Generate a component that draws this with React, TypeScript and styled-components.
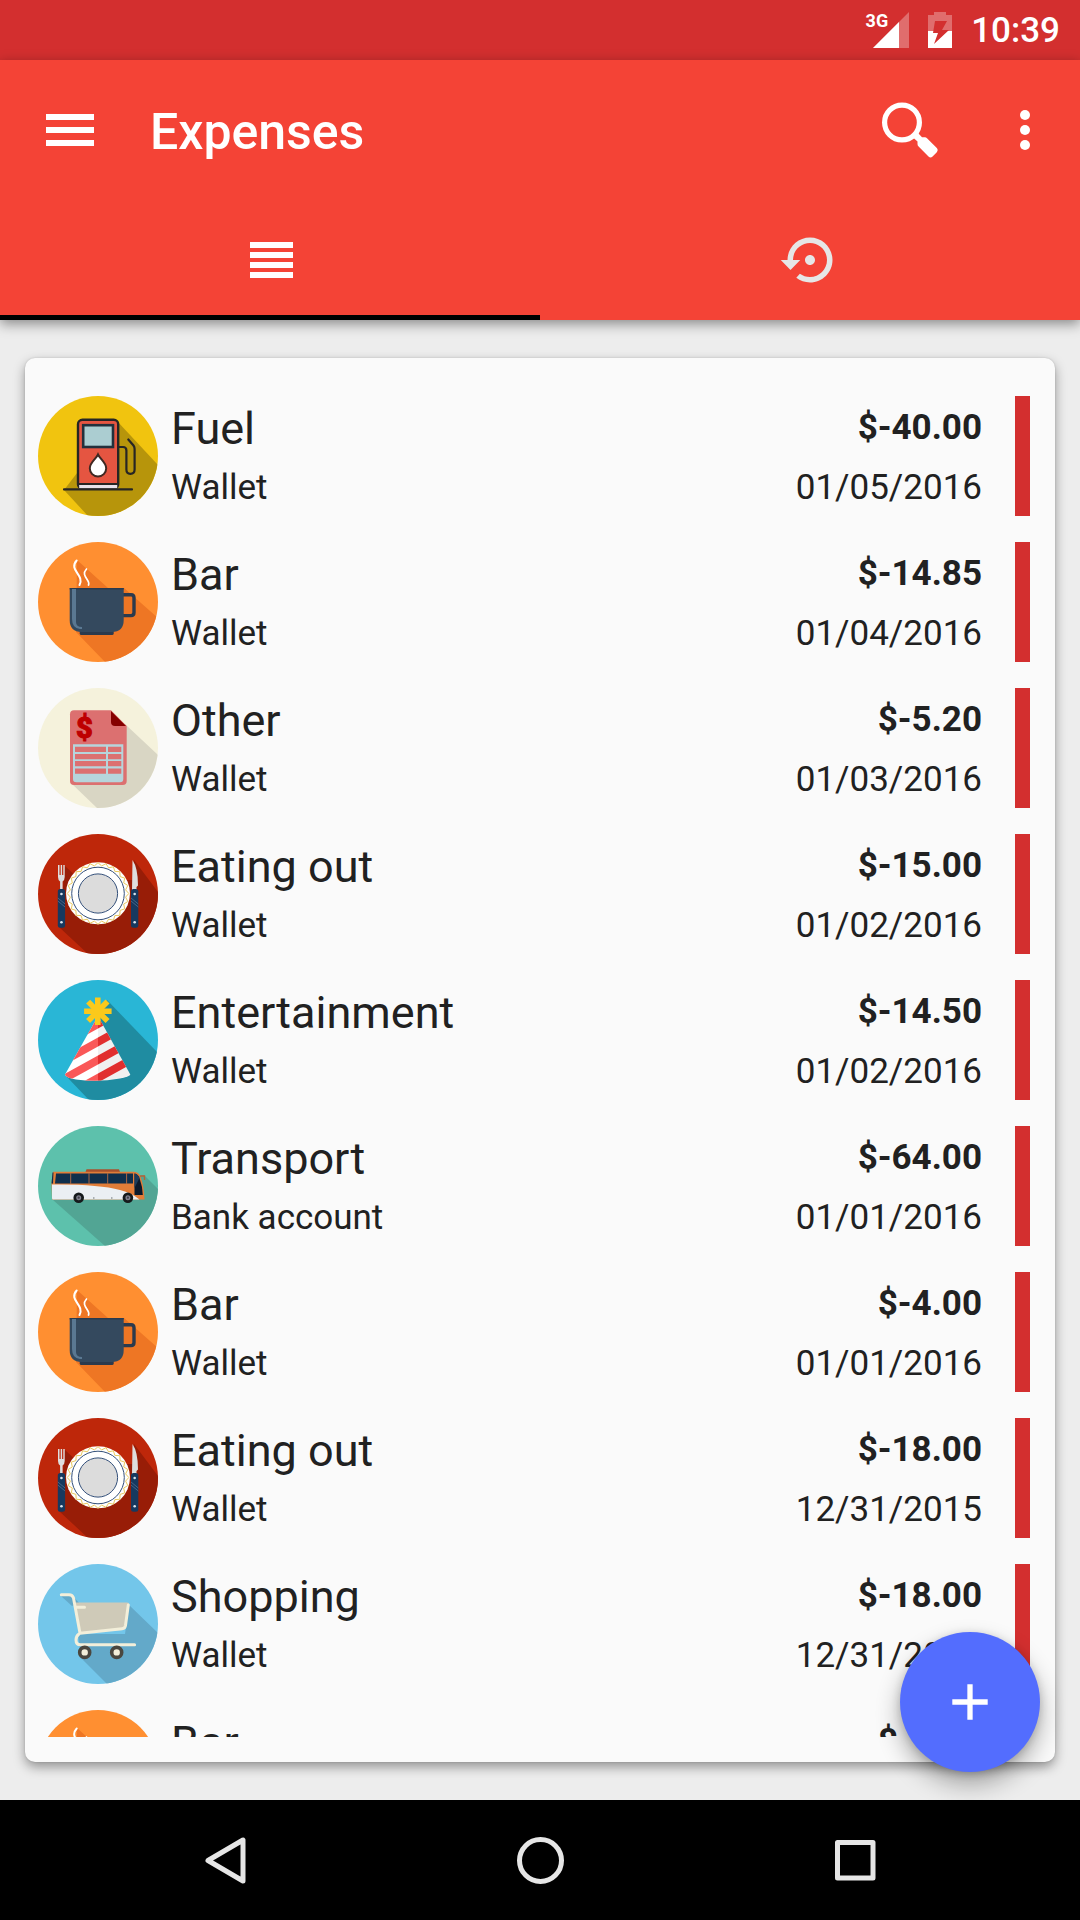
import React from "react";
import styled, { createGlobalStyle } from "styled-components";

const GlobalStyle = createGlobalStyle`
  *, *::before, *::after { box-sizing: border-box; }
  body { margin: 0; background: #ededed; font-family: Roboto, "Liberation Sans", sans-serif; color: #212121; }
  button { border: 0; padding: 0; background: none; color: inherit; font: inherit; cursor: pointer; }
  svg { display: block; }
`;

const Screen = styled.div`
  display: flex;
  flex-direction: column;
  height: 100vh;
`;

const StatusBar = styled.div`
  display: flex;
  justify-content: flex-end;
  align-items: center;
  gap: 19px;
  height: 60px;
  padding: 0 20px;
  background: #d32f2f;
  color: #fff;
`;

const Signal = styled.div`
  position: relative;
`;

const NetworkLabel = styled.span`
  position: absolute;
  right: 21px;
  top: 0;
  font-size: 18px;
  line-height: 18px;
  font-weight: 700;
`;

const Clock = styled.time`
  padding-top: 2px;
  font-size: 35px;
  line-height: 42px;
  font-weight: 500;
`;

const Header = styled.header`
  position: relative;
  z-index: 1;
  background: #f44336;
  color: #fff;
  box-shadow: 0 4px 12px rgba(0, 0, 0, 0.42);
`;

const Toolbar = styled.div`
  display: flex;
  align-items: center;
  height: 140px;
`;

const ToolButton = styled.button<{ $width: number }>`
  display: flex;
  justify-content: center;
  align-items: center;
  width: ${(p) => p.$width}px;
  height: 140px;
`;

const Title = styled.h1`
  flex: 1;
  margin: 0;
  padding: 4px 0 0 10px;
  font-size: 50px;
  line-height: 60px;
  font-weight: 500;
`;

const Tabs = styled.div`
  display: flex;
`;

const Tab = styled.button<{ $active?: boolean }>`
  flex: 1;
  display: flex;
  justify-content: center;
  align-items: center;
  height: 120px;
  color: ${(p) => (p.$active ? "#fff" : "#e6e6e6")};
  box-shadow: ${(p) => (p.$active ? "inset 0 -5px 0 #000" : "none")};
`;

const Content = styled.main`
  position: relative;
  flex: 1;
  min-height: 0;
  display: flex;
  padding: 38px 25px;
`;

const Card = styled.section`
  flex: 1;
  display: flex;
  padding: 25px 25px 25px 13px;
  border-radius: 10px;
  background: #fafafa;
  box-shadow: 0 5px 12px rgba(0, 0, 0, 0.38), 0 0 2px rgba(0, 0, 0, 0.16);
`;

const List = styled.ul`
  flex: 1;
  margin: 0;
  padding: 0;
  list-style: none;
  overflow-y: auto;
  scrollbar-width: none;
`;

const Row = styled.li`
  display: flex;
  padding: 13px 0;
`;

const Column = styled.div<{ $align: "start" | "end"; $gap: number }>`
  flex: ${(p) => (p.$align === "start" ? 1 : "none")};
  display: flex;
  flex-direction: column;
  justify-content: flex-end;
  align-items: flex-${(p) => p.$align};
  gap: ${(p) => p.$gap}px;
  height: 120px;
  padding: 0 0 7px 13px;
`;

const Name = styled.span`
  font-size: 45px;
  line-height: 53px;
`;

const Amount = styled.span`
  font-size: 35px;
  line-height: 42px;
  font-weight: 700;
`;

const Detail = styled.span`
  font-size: 35px;
  line-height: 42px;
`;

const Stripe = styled.div`
  width: 15px;
  height: 120px;
  margin-left: 33px;
  background: #d32f2f;
`;

const AddButton = styled.button`
  position: absolute;
  right: 40px;
  bottom: 28px;
  display: flex;
  justify-content: center;
  align-items: center;
  width: 140px;
  height: 140px;
  border-radius: 50%;
  background: #536dfe;
  color: #fff;
  box-shadow: 0 12px 24px rgba(0, 0, 0, 0.32), 0 2px 8px rgba(0, 0, 0, 0.16);
`;

const NavBar = styled.nav`
  position: relative;
  z-index: 1;
  display: flex;
  height: 120px;
  padding: 0 67px;
  background: #000;
  color: #e6e6e6;
`;

const NavButton = styled.button`
  flex: 1;
  display: flex;
  justify-content: center;
  align-items: center;
`;

type Kind = "fuel" | "bar" | "other" | "food" | "party" | "bus" | "shop";

const backgrounds: Record<Kind, string> = {
  fuel: "#f1c40f",
  bar: "#ff8f31",
  other: "#f5f2dc",
  food: "#be270a",
  party: "#29b6d6",
  bus: "#5dc1ac",
  shop: "#73c6ea",
};

const zigzag = Array.from({ length: 48 }, (_, i) => {
  const r = i % 2 ? 27.8 : 30.8;
  const a = (i / 48) * Math.PI * 2;
  return `${(60 + r * Math.cos(a)).toFixed(1)},${(59.5 + r * Math.sin(a)).toFixed(1)}`;
}).join(" ");

const Fuel = () => (
  <>
    <path d="M79 25L120 69V120H50L26 94Z" fill="#b7950b" />
    <rect x="40" y="23.8" width="40.2" height="69" rx="4.5" fill="#e55541" stroke="#262524" strokeWidth="2.4" />
    <rect x="41.2" y="88.5" width="38" height="4" fill="#e8e2ea" />
    <path d="M40 88H80" stroke="#262524" strokeWidth="2" />
    <rect x="45.2" y="29.2" width="29.8" height="21.8" fill="#abcdd1" stroke="#22303c" strokeWidth="2.6" />
    <path d="M60 58.5C58 63 51.8 66.5 51.8 72.3A8.2 8.2 0 0 0 68.2 72.3C68.2 66.5 62 63 60 58.5Z" fill="#fff" stroke="#3f2822" strokeWidth="2" />
    <path d="M26 93.4H94M81 51H85Q88.4 51 88.4 54.500V73.500Q88.400 77.800 92.400 77.800Q96.600 77.800 96.600 73.500V53Q96.600 51 95.500 49.500L90.300 43.500" fill="none" stroke="#262524" strokeWidth="2.2" strokeLinecap="round" />
  </>
);

const Cup = () => (
  <>
    <path d="M39 18L70 46H86L120 76V120H67L38 90Z" fill="#ee7624" />
    <path d="M85 52.700H93Q96 52.700 96 55.700V70.600Q96 73.600 93 73.600H84" fill="none" stroke="#2b3a4d" strokeWidth="3.4" />
    <path d="M41.700 89H75.700V91.500Q75.700 93 74 93H43.400Q41.700 93 41.700 91.500Z" fill="#2b3a4d" />
    <path d="M31.700 46H85.700V78Q85.700 90 73.700 90H43.700Q31.700 90 31.700 78Z" fill="#34495e" />
    <path d="M31.700 46H85.700V47.500H31.700Z" fill="#2b3a4d" />
    <path d="M34 47H38V80Q38 85 44 85V87H42Q34 86 34 77Z" fill="#5a7892" />
    <path d="M38.700 18.500C30 28 47 33 41.500 43" fill="none" stroke="#fff" strokeWidth="2" strokeLinecap="round" />
    <path d="M48.500 27C42 34 53 38 50.500 43" fill="none" stroke="#fff" strokeWidth="1.700" strokeLinecap="round" />
  </>
);

const Bill = () => (
  <>
    <path d="M87 36L120 67V120H59L33 95Z" fill="#d9d6c4" />
    <path d="M36 22.300H73L88.700 38V93Q88.700 97 84.700 97H36Q32 97 32 93V26.300Q32 22.300 36 22.300Z" fill="#dc7070" />
    <path d="M73 23L88 38H77Q73 38 73 34Z" fill="#850000" />
    <path d="M35 56.300H85.300V91Q85.300 94.300 82 94.300H38.300Q35 94.300 35 91Z" fill="#b6d5dc" />
    {[58.700, 66, 73, 80.500].map((y) => (
      <path key={y} d={`M37 ${y}H68V${y + 5.2}H37ZM70 ${y}H83.300V${y + 5.2}H70Z`} fill="#dc7070" />
    ))}
    <text x="46.300" y="50" textAnchor="middle" fontFamily="Roboto, sans-serif" fontSize="29" fontWeight="900" fill="#be0000" stroke="#be0000" strokeWidth="1">$</text>
  </>
);

const Plate = () => (
  <>
    <path d="M27 32L42 46H96V26L120 58V120H50L21 93Z" fill="#981d07" />
    <ellipse cx="60" cy="59.300" rx="32" ry="31" fill="#fff" />
    <polygon points={zigzag} fill="none" stroke="#e9c95f" strokeWidth="1" />
    <circle cx="60" cy="59.500" r="26.300" fill="#fff" stroke="#34507a" strokeWidth="1" />
    <circle cx="60" cy="59.500" r="19.600" fill="#dcdcdc" stroke="#34507a" strokeWidth="1" />
    <path d="M20 31H21.500V41H22.700V31H24.100V41H25.300V31H26.700V43Q26.700 46 24.600 47.500V56H22.100V47.500Q20 46 20 43Z" fill="#dedede" />
    <path d="M94.500 26Q100 34 100 51.500L98.500 53V56H94Z" fill="#dedede" />
    {[19.800, 93].map((x) => (
      <g key={x}>
        <rect x={x} y="55" width="7.300" height="38.700" rx="2.500" fill="#17395f" />
        <circle cx={x + 3.650} cy="60" r="1.300" fill="#dce5ee" />
        <circle cx={x + 3.650} cy="88.200" r="1.300" fill="#dce5ee" />
        <path d={`M${x} 64L${x + 7.300} 70M${x} 67L${x + 7.300} 73`} stroke="#53708f" strokeWidth=".8" />
      </g>
    ))}
  </>
);

const PartyHat = () => (
  <>
    <defs>
      <clipPath id="hatShape"><path d="M60 36L92.300 94.500Q92 96.500 82 98.500Q60 102.500 38 99.500Q27.500 97.500 27 94.500Z" /></clipPath>
    </defs>
    <path d="M69 20L120 73V120H51L28 96Z" fill="#1f8ca1" />
    <g clipPath="url(#hatShape)">
      <rect x="20" y="30" width="40" height="75" fill="#fff" />
      <rect x="60" y="30" width="40" height="75" fill="#f0f0f0" />
      {[39.500, 57.500, 75.500, 93.500].map((y) => (
        <g key={y}>
          <path d={`M60 ${y}V${y + 9}L20 ${y + 31}V${y + 22}Z`} fill="#fa5858" />
          <path d={`M60 ${y}V${y + 9}L100 ${y - 13}V${y - 22}Z`} fill="#e12e2e" />
        </g>
      ))}
    </g>
    <g stroke="#fbc91b" strokeWidth="5.600">
      {[0, 45, 90, 135].map((a) => (
        <path key={a} d="M59.800 17.500V45" transform={`rotate(${a} 59.800 31.300)`} />
      ))}
    </g>
  </>
);

const Bus = () => (
  <>
    <path d="M106 49L120 63V120H67L15 74L60 60Z" fill="#52a594" />
    <path d="M48.500 43.300H81L82 46H47.500Z" fill="#a8512c" />
    <path d="M15 45.700H96Q101 45.700 103 52Q106 61 106.500 73.500H14L13.500 57Z" fill="#e17d38" />
    <path d="M14 58.500Q60 58 82 64Q94 67 101.500 73.500H15Q14 73.500 14 72Z" fill="#ebeff3" />
    <path d="M18 47.500H95V57.500H17ZM14.500 46.500L15.500 46.500L15 57.500H13.500Z" fill="#102f4c" />
    <path d="M32.700 47V58M51 47V58M69.700 47V58M88.600 47V58" stroke="#a96845" strokeWidth="1" />
    <path d="M96.500 47.500Q100 48 101.500 52Q104.700 61 104.800 69H96.500Z" fill="#0b192b" />
    <path d="M96.500 47.500Q100 48 101.500 52L96.500 62Z" fill="#1b3c5c" />
    <path d="M102 50H106.500V54" fill="none" stroke="#b66234" strokeWidth="1.300" />
    <path d="M55 72H56.500M73 72H74.500" stroke="#6a7075" strokeWidth="1.200" />
    {[40.700, 89.900].map((x) => (
      <g key={x}>
        <circle cx={x} cy="71.700" r="5.300" fill="#15191b" />
        <circle cx={x} cy="71.700" r="2.500" fill="#81808e" />
        <circle cx={x} cy="71.700" r="1.100" fill="#41404a" />
      </g>
    ))}
  </>
);

const Cart = () => (
  <>
    <path d="M91 41L120 69V120H69L43 94L40 70H87Z" fill="#63a9c9" />
    <path d="M23 32L34 42L41 39L34 31Z" fill="#63a9c9" />
    <path d="M37 38.500H89Q92 38.500 91 42L88 63Q87.500 65.500 85 66L43 69Z" fill="#cfcab8" />
    <path d="M23.300 30.700H31Q34.500 30.700 35.500 34L42 69.300L84 64.800Q87 64.500 87.500 61.500L90.300 41M41 70Q38 72 38 76Q38 80.800 42.500 80.800H96.600M38 43.300H46.500" fill="none" stroke="#f3efda" strokeWidth="3" strokeLinecap="round" strokeLinejoin="round" />
    {[46.700, 78.700].map((x) => (
      <circle key={x} cx={x} cy="88.400" r="5" fill="#f3efda" stroke="#4a473f" strokeWidth="3.600" />
    ))}
  </>
);

const drawings: Record<Kind, () => React.ReactElement> = {
  fuel: Fuel,
  bar: Cup,
  other: Bill,
  food: Plate,
  party: PartyHat,
  bus: Bus,
  shop: Cart,
};

const IconCircle = styled.div<{ $color: string }>`
  width: 120px;
  height: 120px;
  border-radius: 50%;
  overflow: hidden;
  background: ${(p) => p.$color};
`;

function CategoryIcon({ kind }: { kind: Kind }) {
  const Drawing = drawings[kind];
  return (
    <IconCircle $color={backgrounds[kind]}>
      <svg width="120" height="120" viewBox="0 0 120 120" aria-hidden="true">
        <Drawing />
      </svg>
    </IconCircle>
  );
}

type Expense = { kind: Kind; name: string; account: string; amount: string; date: string };

const expenses: Expense[] = [
  { kind: "fuel", name: "Fuel", account: "Wallet", amount: "$-40.00", date: "01/05/2016" },
  { kind: "bar", name: "Bar", account: "Wallet", amount: "$-14.85", date: "01/04/2016" },
  { kind: "other", name: "Other", account: "Wallet", amount: "$-5.20", date: "01/03/2016" },
  { kind: "food", name: "Eating out", account: "Wallet", amount: "$-15.00", date: "01/02/2016" },
  { kind: "party", name: "Entertainment", account: "Wallet", amount: "$-14.50", date: "01/02/2016" },
  { kind: "bus", name: "Transport", account: "Bank account", amount: "$-64.00", date: "01/01/2016" },
  { kind: "bar", name: "Bar", account: "Wallet", amount: "$-4.00", date: "01/01/2016" },
  { kind: "food", name: "Eating out", account: "Wallet", amount: "$-18.00", date: "12/31/2015" },
  { kind: "shop", name: "Shopping", account: "Wallet", amount: "$-18.00", date: "12/31/2015" },
  { kind: "bar", name: "Bar", account: "Wallet", amount: "$-4.00", date: "12/31/2015" },
];

export default function App() {
  return (
    <Screen>
      <GlobalStyle />
      <StatusBar>
        <Signal>
          <NetworkLabel>3G</NetworkLabel>
          <svg width="36" height="36" viewBox="0 0 36 36" fill="#fff" aria-hidden="true">
            <path d="M36 0V36H0Z" opacity=".3" />
            <path d="M26 10V36H0Z" />
          </svg>
        </Signal>
        <svg width="24" height="36" viewBox="0 0 24 36" aria-hidden="true">
          <path d="M6 0H18V3H24V19H0V3H6Z" fill="#fff" opacity=".3" />
          <path d="M0 19H24V36H0Z" fill="#fff" />
          <path d="M7 9H19L14 18H21L6 32L10 21H5Z" fill="#d32f2f" />
        </svg>
        <Clock>10:39</Clock>
      </StatusBar>
      <Header>
        <Toolbar>
          <ToolButton $width={140} aria-label="Open menu">
            <svg width="48" height="32" viewBox="0 0 48 32" fill="currentColor">
              <path d="M0 0H48V6H0ZM0 13H48V19H0ZM0 26H48V32H0Z" />
            </svg>
          </ToolButton>
          <Title>Expenses</Title>
          <ToolButton $width={120} aria-label="Search">
            <svg width="56" height="56" viewBox="0 0 56 56">
              <circle cx="20" cy="20.500" r="17.400" fill="none" stroke="currentColor" strokeWidth="5.200" />
              <path d="M31 35.500L36 31L40 35.300H43Q44 35.300 45 36.200L54.800 46Q56.500 48 54.800 50.300L50.600 54.500Q48.500 56.500 46.500 54.500L36.600 44.500Q35.500 43.500 35.500 42V39.500Z" fill="currentColor" />
            </svg>
          </ToolButton>
          <ToolButton $width={110} aria-label="More options">
            <svg width="10" height="40" viewBox="0 0 10 40" fill="currentColor">
              <circle cx="5" cy="5" r="5" />
              <circle cx="5" cy="20" r="5" />
              <circle cx="5" cy="35" r="5" />
            </svg>
          </ToolButton>
        </Toolbar>
        <Tabs role="tablist">
          <Tab $active role="tab" aria-selected="true" aria-label="List">
            <svg width="46" height="36" viewBox="0 0 46 36" fill="currentColor">
              <path d="M3 0H46V6H3ZM3 10H46V16H3ZM3 20H46V26H3ZM3 30H46V36H3Z" />
            </svg>
          </Tab>
          <Tab role="tab" aria-selected="false" aria-label="Recurring">
            <svg width="60" height="60" viewBox="0.3 0 23.4 24" fill="currentColor">
              <path d="M14 12c0-1.100-.9-2-2-2s-2 .9-2 2 .9 2 2 2 2-.9 2-2zm-2-9c-4.970 0-9 4.030-9 9H.3l3.900 4 3.900-4H5.200c0-3.800 3.050-6.800 6.800-6.800s6.800 3.050 6.800 6.800-3.050 6.800-6.800 6.800c-1.500 0-2.900-.48-4.060-1.300l-1.420 1.640C8.040 20.300 9.940 21 12 21c4.970 0 9-4.030 9-9s-4.030-9-9-9z" />
            </svg>
          </Tab>
        </Tabs>
      </Header>
      <Content>
        <Card>
          <List>
            {expenses.map((e, i) => (
              <Row key={i}>
                <CategoryIcon kind={e.kind} />
                <Column $align="start" $gap={12}>
                  <Name>{e.name}</Name>
                  <Detail>{e.account}</Detail>
                </Column>
                <Column $align="end" $gap={18}>
                  <Amount>{e.amount}</Amount>
                  <Detail>{e.date}</Detail>
                </Column>
                <Stripe />
              </Row>
            ))}
          </List>
        </Card>
        <AddButton aria-label="Add expense">
          <svg width="36" height="36" viewBox="0 0 36 36" fill="none" stroke="currentColor" strokeWidth="5.300">
            <path d="M18 .3V35.700M.3 18H35.700" />
          </svg>
        </AddButton>
      </Content>
      <NavBar>
        <NavButton aria-label="Back">
          <svg width="42" height="48" viewBox="0 0 42 48" fill="none" stroke="currentColor" strokeWidth="5" strokeLinejoin="round">
            <path d="M39 4V45L4 24.500Z" />
          </svg>
        </NavButton>
        <NavButton aria-label="Home">
          <svg width="48" height="48" viewBox="0 0 48 48" fill="none" stroke="currentColor" strokeWidth="5">
            <circle cx="24.500" cy="24.500" r="21" />
          </svg>
        </NavButton>
        <NavButton aria-label="Recent apps">
          <svg width="42" height="42" viewBox="0 0 42 42" fill="none" stroke="currentColor" strokeWidth="5" strokeLinejoin="round">
            <path d="M3.500 3.500H39V39H3.500Z" />
          </svg>
        </NavButton>
      </NavBar>
    </Screen>
  );
}
